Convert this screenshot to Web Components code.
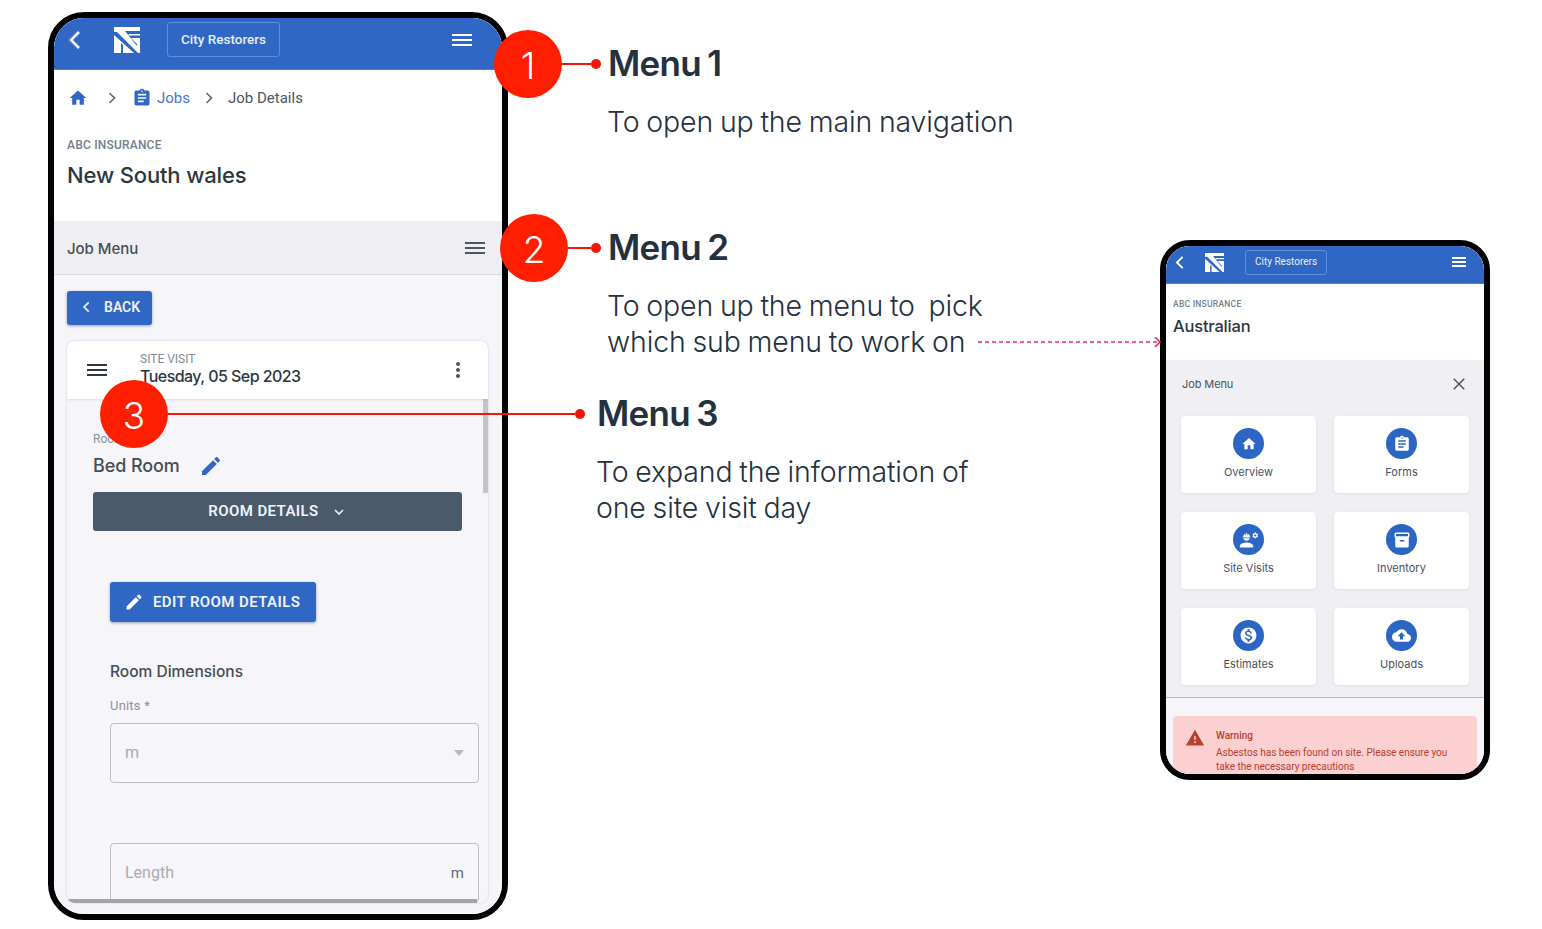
<!DOCTYPE html>
<html lang="en">
<head>
<meta charset="utf-8">
<title>Menus</title>
<style>
  html, body { margin: 0; background: #fff; }
  body { width: 1542px; height: 929px; position: relative; overflow: hidden; font-family: Roboto, sans-serif; }
</style>
</head>
<body>
<annotated-canvas>
  <phone-frame style="--x:48px;--y:12px;--pw:460px;--ph:908px;--pr:36px"><job-screen></job-screen></phone-frame>
  <phone-frame style="--x:1160px;--y:240px;--pw:330px;--ph:540px;--pr:30px"><menu-screen></menu-screen></phone-frame>

  <note-block style="--x:608px;--y:40px" title="Menu 1">To open up the main navigation</note-block>
  <note-block style="--x:608px;--y:224px" title="Menu 2">To open up the menu to&nbsp; pick<br>which sub menu to work on</note-block>
  <note-block style="--x:597px;--y:390px" title="Menu 3">To expand the information of<br>one site visit day</note-block>

  <call-out style="--x:494px;--y:30px;--len:29px">1</call-out>
  <call-out style="--x:500px;--y:214px;--len:23px">2</call-out>
  <call-out style="--x:100px;--y:380px;--len:407px">3</call-out>
  <dash-arrow style="--x:978px;--y:337px"></dash-arrow>
</annotated-canvas>

<script>
const PATHS = {
  home: "M10 20v-6h4v6h5v-8h3L12 3 2 12h3v8z",
  assignment: "M19 3h-4.18C14.4 1.84 13.3 1 12 1c-1.3 0-2.4.84-2.82 2H5c-1.1 0-2 .9-2 2v14c0 1.1.9 2 2 2h14c1.1 0 2-.9 2-2V5c0-1.1-.9-2-2-2zm-7 0c.55 0 1 .45 1 1s-.45 1-1 1-1-.45-1-1 .45-1 1-1zm2 14H7v-2h7v2zm3-4H7v-2h10v2zm0-4H7V7h10v2z",
  edit: "M3 17.25V21h3.75L17.81 9.94l-3.75-3.75L3 17.25zM20.71 7.04c.39-.39.39-1.02 0-1.41l-2.34-2.34c-.39-.39-1.02-.39-1.41 0l-1.83 1.83 3.75 3.75 1.83-1.83z",
  more: "M12 8c1.1 0 2-.9 2-2s-.9-2-2-2-2 .9-2 2 .9 2 2 2zm0 2c-1.1 0-2 .9-2 2s.9 2 2 2 2-.9 2-2-.9-2-2-2zm0 6c-1.1 0-2 .9-2 2s.9 2 2 2 2-.9 2-2-.9-2-2-2z",
  warning: "M1 21h22L12 2 1 21zm12-3h-2v-2h2v2zm0-4h-2v-4h2v4z",
  paid: "M12 2C6.48 2 2 6.48 2 12s4.48 10 10 10 10-4.48 10-10S17.52 2 12 2zm1.41 16.09V20h-2.67v-1.93c-1.71-.36-3.16-1.46-3.27-3.4h1.96c.1 1.05.82 1.87 2.65 1.87 1.96 0 2.4-.98 2.4-1.59 0-.83-.44-1.61-2.67-2.14-2.48-.6-4.18-1.62-4.18-3.67 0-1.72 1.39-2.84 3.11-3.21V4h2.67v1.95c1.86.45 2.79 1.86 2.87 3.39H14.3c-.05-1.11-.64-1.87-2.22-1.87-1.5 0-2.4.68-2.4 1.64 0 .84.65 1.39 2.67 1.91s4.18 1.39 4.18 3.91c-.01 1.83-1.38 2.83-3.12 3.16z",
  upload: "M19.35 10.04C18.67 6.59 15.64 4 12 4 9.11 4 6.6 5.64 5.35 8.04 2.34 8.36 0 10.91 0 14c0 3.31 2.69 6 6 6h13c2.76 0 5-2.24 5-5 0-2.64-2.05-4.78-4.65-4.96zM14 13v4h-4v-4H7l5-5 5 5h-3z",
  box: "M20 2H4c-1 0-2 .9-2 2v3.01c0 .72.43 1.34 1 1.69V20c0 1.1 1.1 2 2 2h14c.9 0 2-.9 2-2V8.7c.57-.35 1-.97 1-1.69V4c0-1.1-1-2-2-2zm-5 12H9v-2h6v2zm5-7H4V4l16-.02V7z",
  worker: "M9 15c-2.67 0-8 1.34-8 4v2h16v-2c0-2.66-5.33-4-8-4zM4.74 9h8.53c.27 0 .49-.22.49-.49v-.02c0-.27-.22-.49-.49-.49H13c0-1.48-.81-2.75-2-3.45v.95c0 .28-.22.5-.5.5s-.5-.22-.5-.5V4.14C9.68 4.06 9.35 4 9 4s-.68.06-1 .14V5.5c0 .28-.22.5-.5.5S7 5.78 7 5.5v-.95C5.81 5.25 5 6.52 5 8h-.26c-.27 0-.49.22-.49.49v.03c0 .26.22.48.49.48zM9 13c1.86 0 3.41-1.28 3.86-3H5.14c.45 1.72 2 3 3.86 3zM22.1 6.84c.01-.11.02-.22.02-.34s-.01-.23-.03-.34l.74-.58c.07-.05.08-.15.04-.22l-.7-1.21c-.04-.08-.14-.1-.21-.08l-.86.35c-.18-.14-.38-.25-.59-.34l-.13-.93c-.02-.09-.09-.15-.18-.15h-1.4c-.09 0-.16.06-.17.15l-.13.93c-.21.09-.41.21-.59.34l-.87-.35c-.08-.03-.17 0-.21.08l-.7 1.21c-.04.08-.03.17.04.22l.74.58c-.02.11-.03.23-.03.34s.01.23.03.34l-.74.58c-.07.05-.08.15-.04.22l.7 1.21c.04.08.14.1.21.08l.87-.35c.18.14.38.25.59.34l.13.93c.01.09.08.15.17.15h1.4c.09 0 .16-.06.17-.15l.13-.93c.21-.09.41-.21.59-.34l.87.35c.08.03.17 0 .21-.08l.7-1.21c.04-.08.03-.17-.04-.22l-.73-.58zM19.5 7.75c-.69 0-1.25-.56-1.25-1.25s.56-1.25 1.25-1.25 1.25.56 1.25 1.25-.56 1.25-1.25 1.25z"
};

// stroked glyphs share one viewBox too
const STROKES = {
  back: "M15 4 7 12l8 8",
  next: "M9 6l6 6-6 6",
  down: "M6 9l6 6 6-6",
  close: "M5 5l14 14M19 5L5 19"
};

class AppIcon extends HTMLElement {
  connectedCallback() {
    const name = this.getAttribute("name");
    const size = this.getAttribute("size") || 24;
    const color = this.getAttribute("color") || "currentColor";
    const weight = this.getAttribute("weight") || 2.4;
    const shape = PATHS[name]
      ? `<path fill="${color}" d="${PATHS[name]}"/>`
      : `<path fill="none" stroke="${color}" stroke-width="${weight}" d="${STROKES[name]}"/>`;
    this.attachShadow({ mode: "open" }).innerHTML = `
      <style>:host { display: inline-flex; flex: none; } svg { display: block; }</style>
      <svg width="${size}" height="${size}" viewBox="0 0 24 24">${shape}</svg>`;
  }
}
customElements.define("app-icon", AppIcon);

class BurgerIcon extends HTMLElement {
  connectedCallback() {
    this.attachShadow({ mode: "open" }).innerHTML = `
      <style>
        :host { display: flex; flex-direction: column; flex: none; gap: var(--bgap, 3px); width: var(--bw, 20px); }
        i { display: block; height: 2px; background: currentColor; }
      </style>
      <i></i><i></i><i></i>`;
  }
}
customElements.define("burger-icon", BurgerIcon);

class BrandLogo extends HTMLElement {
  connectedCallback() {
    const size = this.getAttribute("size") || 26;
    this.attachShadow({ mode: "open" }).innerHTML = `
      <style>:host { display: inline-flex; flex: none; } svg { display: block; }</style>
      <svg width="${size}" height="${size}" viewBox="0 0 26 26">
        <rect width="26" height="26" fill="#fff"/>
        <g fill="#3067c4">
          <polygon points="0,5 3,5 24,26 20,26 0,8"/>
          <polygon points="9,18 9,26 7,26 7,16"/>
          <polygon points="3,13 3,14 3,26 0,26 0,11" fill="#fff"/>
          <polygon points="11,4 26,4 26,7 15,7 14,8.5 26,8.5 26,11 17,11 23,17 23,19"/>
        </g>
      </svg>`;
  }
}
customElements.define("brand-logo", BrandLogo);

class PhoneFrame extends HTMLElement {
  constructor() {
    super();
    this.attachShadow({ mode: "open" }).innerHTML = `
      <style>
        :host {
          position: absolute; left: var(--x); top: var(--y); z-index: 0;
          width: var(--pw); height: var(--ph); box-sizing: border-box;
          border: 6px solid #000; border-radius: var(--pr);
          background: #fff; overflow: hidden; display: block;
        }
      </style>
      <slot></slot>`;
  }
}
customElements.define("phone-frame", PhoneFrame);

class AppBar extends HTMLElement {
  connectedCallback() {
    const small = this.hasAttribute("small");
    this.attachShadow({ mode: "open" }).innerHTML = `
      <style>
        :host {
          display: flex; align-items: center; box-sizing: border-box;
          height: var(--bar-h); background: #3067c4; color: #fff;
          padding: 0 var(--bar-right) var(--bar-lift) var(--bar-left);
          border-bottom: 1px solid #4a7fd6;
        }
        .logo { display: flex; margin-left: var(--logo-gap); }
        .org {
          margin-left: var(--org-gap); height: var(--org-h); box-sizing: border-box; white-space: nowrap;
          display: flex; align-items: center; padding: 0 var(--org-pad);
          border: 1px solid #5d8fe0; border-radius: 3px;
          font: var(--org-fw) var(--org-fs)/1 Roboto, sans-serif; color: #e6edf9;
        }
        burger-icon { margin-left: auto; }
      </style>
      <app-icon name="back" size="${small ? 17 : 24}" color="#fff" weight="2.6"></app-icon>
      <span class="logo"><brand-logo size="${small ? 19 : 26}"></brand-logo></span>
      <span class="org">City Restorers</span>
      <burger-icon></burger-icon>`;
  }
}
customElements.define("app-bar", AppBar);

class MuiButton extends HTMLElement {
  constructor() {
    super();
    this.attachShadow({ mode: "open" }).innerHTML = `
      <style>
        :host {
          display: inline-flex; align-items: center; justify-content: center; box-sizing: border-box;
          height: var(--bh, 34px); padding: var(--pad, 0 10px); gap: var(--gap, 10px);
          background: var(--bg, #3067c4); color: #eef3fb; border-radius: 3px; white-space: nowrap;
          font: 600 var(--fs, 14px)/1 Roboto, sans-serif; letter-spacing: var(--ls, 0);
          box-shadow: 0 1px 3px rgba(40,60,100,.45);
        }
      </style>
      <slot></slot>`;
  }
}
customElements.define("mui-button", MuiButton);

class OutlinedField extends HTMLElement {
  constructor() {
    super();
    this.attachShadow({ mode: "open" }).innerHTML = `
      <style>
        :host {
          display: flex; align-items: center; justify-content: space-between; box-sizing: border-box;
          border: 1px solid #bdbdc3; border-radius: 4px; padding: 0 14px;
          font: 400 16px/1 Roboto, sans-serif; color: #a9abb0;
        }
      </style>
      <slot></slot><slot name="end"></slot>`;
  }
}
customElements.define("outlined-field", OutlinedField);

class JobScreen extends HTMLElement {
  constructor() {
    super();
    this.attachShadow({ mode: "open" }).innerHTML = `
      <style>
        :host { display: flex; flex-direction: column; height: 100%; background: #f5f5fa; color: #2f3a46; }
        app-bar { --bar-h: 52px; --bar-lift: 8px; --bar-left: 10px; --bar-right: 30px; --logo-gap: 26px; --org-gap: 27px; --org-h: 35px; --org-pad: 13px; --org-fs: 13.5px; --org-fw: 500; flex: none; }
        .top { background: #fff; height: 151px; box-sizing: border-box; padding: 0 13px; flex: none; }
        .crumbs { display: flex; align-items: center; height: 56px; font: 400 15px/1 Roboto, sans-serif; color: #4a5560; }
        .crumbs .home { margin-left: 1px; }
        .crumbs .sep1 { margin-left: 14px; }
        .crumbs .clip { margin-left: 10px; }
        .crumbs .jobs { margin-left: 5px; color: #4a75c8; }
        .crumbs .sep2 { margin-left: 9px; }
        .crumbs .cur { margin-left: 9px; }
        .ins { margin-top: 12px; font: 500 12px/14px Roboto, sans-serif; letter-spacing: .2px; color: #75808c; }
        h1 { margin: 10px 0 0; font: 500 22px/26px Inter, sans-serif; letter-spacing: -.15px; color: #2c3640; }
        .menu-bar {
          flex: none; display: flex; align-items: center; justify-content: space-between; box-sizing: border-box;
          height: 54px; padding: 1px 17px 0 13px; background: #eeeef3; border-bottom: 1px solid #d9d9de;
          font: 500 15px/1 Inter, sans-serif; letter-spacing: -.05px; color: #454f59;
        }
        .body { flex: 1; min-height: 0; padding: 16px 14px 11px 13px; display: flex; flex-direction: column; align-items: flex-start; }
        .back { --bh: 34px; --pad: 0 12px 2px 13px; --gap: 10px; flex: none; }
        .card {
          margin-top: 16px; flex: 1; min-height: 0; width: 100%; box-sizing: border-box; overflow: hidden;
          border-radius: 8px; position: relative;
          box-shadow: 0 0 2px rgba(60,60,80,.25); background: #f5f5fa; display: flex; flex-direction: column;
        }
        .card-head {
          flex: none; height: 58px; box-sizing: border-box; background: #fff;
          display: flex; align-items: center; padding: 0 18px 0 20px;
          box-shadow: 0 1px 2px rgba(60,60,80,.12); position: relative; z-index: 1;
        }
        .card-head .who { margin: -3px 0 0 33px; flex: 1; }
        .kicker { font: 400 12px/14px Roboto, sans-serif; color: #7f8993; }
        .date { font: 500 16px/20px Inter, sans-serif; letter-spacing: -.55px; color: #2c3640; }
        .scroll { position: absolute; right: 0; top: 58px; width: 5px; height: 94px; background: #c4c4c8; }
        .content { padding: 32px 26px 0; flex: 1; min-height: 0; overflow: hidden; position: relative; }
        .label { font: 400 12px/16px Roboto, sans-serif; color: #8a929b; }
        .room { display: flex; align-items: center; margin-top: 4px; height: 30px; font: 500 18px/1 Inter, sans-serif; letter-spacing: -.1px; color: #454d56; }
        .room app-icon { margin-left: 19px; }
        .details { width: 369px; --bh: 39px; --bg: #4a5a6a; --gap: 12px; --fs: 15px; --ls: .4px; margin-top: 11px; box-shadow: none; display: flex; }
        .inner { padding-left: 17px; }
        .edit { --bh: 40px; --pad: 0 16px 0 14px; --gap: 9px; --fs: 15px; --ls: .4px; margin-top: 51px; }
        h2 { margin: 41px 0 0; font: 500 15.5px/18px Inter, sans-serif; color: #454d56; }
        .units { margin-top: 17px; font: 400 13px/15px Roboto, sans-serif; color: #8a929b; letter-spacing: .2px; }
        .select { width: 369px; height: 60px; margin-top: 10px; }
        .caret { width: 0; height: 0; border: 5px solid transparent; border-top: 6px solid #b8b9bd; border-bottom: 0; }
        .length { width: 369px; height: 60px; margin-top: 60px; }
        .unit { color: #5d6f80; font-size: 15px; }
        .edge { position: absolute; left: 1px; right: 11px; bottom: 0; height: 4px; background: #a3a4ab; z-index: 2; border-radius: 0 0 0 8px; }
      </style>
      <app-bar></app-bar>
      <div class="top">
        <div class="crumbs">
          <app-icon class="home" name="home" size="20" color="#3067c4"></app-icon>
          <app-icon class="sep1" name="next" size="20" color="#5f6b76" weight="2"></app-icon>
          <app-icon class="clip" name="assignment" size="20" color="#3067c4"></app-icon>
          <span class="jobs">Jobs</span>
          <app-icon class="sep2" name="next" size="20" color="#5f6b76" weight="2"></app-icon>
          <span class="cur">Job Details</span>
        </div>
        <div class="ins">ABC INSURANCE</div>
        <h1>New South wales</h1>
      </div>
      <div class="menu-bar"><span>Job Menu</span><burger-icon style="color:#4a5560"></burger-icon></div>
      <div class="body">
        <mui-button class="back"><app-icon name="back" size="14" color="#e6edf9" weight="3"></app-icon><span>BACK</span></mui-button>
        <div class="card">
          <div class="card-head">
            <burger-icon style="color:#2c3640"></burger-icon>
            <div class="who"><div class="kicker">SITE VISIT</div><div class="date">Tuesday, 05 Sep 2023</div></div>
            <app-icon name="more" size="24" color="#4a5560"></app-icon>
          </div>
          <div class="scroll"></div>
          <div class="content">
            <div class="label">Room</div>
            <div class="room"><span>Bed Room</span><app-icon name="edit" size="24" color="#3067c4"></app-icon></div>
            <mui-button class="details"><span>ROOM DETAILS</span><app-icon name="down" size="16" color="#e6edf9" weight="2.6"></app-icon></mui-button>
            <div class="inner">
              <mui-button class="edit"><app-icon name="edit" size="20" color="#fff"></app-icon><span>EDIT ROOM DETAILS</span></mui-button>
              <h2>Room Dimensions</h2>
              <div class="units">Units *</div>
              <outlined-field class="select"><span>m</span><span slot="end" class="caret"></span></outlined-field>
              <outlined-field class="length"><span>Length</span><span slot="end" class="unit">m</span></outlined-field>
            </div>
            <div class="edge"></div>
          </div>
        </div>
      </div>`;
  }
}
customElements.define("job-screen", JobScreen);

class MenuTile extends HTMLElement {
  connectedCallback() {
    const icon = this.getAttribute("icon");
    const size = this.getAttribute("size") || 17;
    this.attachShadow({ mode: "open" }).innerHTML = `
      <style>
        :host {
          display: flex; flex-direction: column; align-items: center; box-sizing: border-box;
          height: 77px; padding-top: 12px; background: #fff; border-radius: 4px;
          box-shadow: 0 1px 3px rgba(70,70,100,.12);
          font: 400 11px/14px Inter, sans-serif; color: #4a525b;
        }
        .disc { width: 31px; height: 31px; border-radius: 50%; background: #2c66c4; display: grid; place-items: center; }
        .name { margin-top: 6px; }
      </style>
      <span class="disc"><app-icon name="${icon}" size="${size}" color="#fff"></app-icon></span>
      <span class="name"><slot></slot></span>`;
  }
}
customElements.define("menu-tile", MenuTile);

class MenuScreen extends HTMLElement {
  constructor() {
    super();
    this.attachShadow({ mode: "open" }).innerHTML = `
      <style>
        :host { display: flex; flex-direction: column; height: 100%; background: #f5f5fa; overflow: hidden; }
        app-bar { --bar-h: 38px; --bar-lift: 5px; --bar-left: 6px; --bar-right: 18px; --logo-gap: 16px; --org-gap: 21px; --org-h: 25px; --org-pad: 9px; --org-fs: 10px; --org-fw: 400; --bw: 14px; --bgap: 2px; flex: none; }
        .top { flex: none; height: 76px; box-sizing: border-box; background: #fff; padding: 15px 7px 0; }
        .ins { font: 500 8.5px/10px Roboto, sans-serif; letter-spacing: .25px; color: #75808c; }
        h1 { margin: 7px 0 0; font: 500 16.5px/20px Inter, sans-serif; letter-spacing: -.2px; color: #2c3640; }
        .panel { flex: none; height: 338px; box-sizing: border-box; background: #efeff4; border-bottom: 1px solid #b9b9bd; padding: 0 15px; }
        .panel-head { height: 48px; margin-bottom: 8px; display: flex; align-items: center; justify-content: space-between; padding-right: 1px; font: 400 11px/1 Inter, sans-serif; letter-spacing: -.1px; color: #4a525b; }
        .panel-head span { padding-left: 1px; }
        .grid { display: grid; grid-template-columns: 135px 135px; column-gap: 18px; row-gap: 19px; }
        .alert {
          margin: 18px 7px 0; height: 70px; flex: none; box-sizing: border-box; padding: 13px 29px 0 43px;
          border-radius: 4px; background: #fccfd0; color: #b8402f; position: relative;
          font: 400 10px/14px Roboto, sans-serif;
        }
        .alert app-icon { position: absolute; left: 12px; top: 12px; }
        .alert b { display: block; font-weight: 500; margin-bottom: 3px; }
      </style>
      <app-bar small></app-bar>
      <div class="top"><div class="ins">ABC INSURANCE</div><h1>Australian</h1></div>
      <div class="panel">
        <div class="panel-head"><span>Job Menu</span><app-icon name="close" size="18" color="#4a525b" weight="1.9"></app-icon></div>
        <div class="grid">
          <menu-tile icon="home" size="16">Overview</menu-tile>
          <menu-tile icon="assignment" size="18">Forms</menu-tile>
          <menu-tile icon="worker" size="20">Site Visits</menu-tile>
          <menu-tile icon="box" size="18">Inventory</menu-tile>
          <menu-tile icon="paid" size="19">Estimates</menu-tile>
          <menu-tile icon="upload" size="19">Uploads</menu-tile>
        </div>
      </div>
      <div class="alert">
        <app-icon name="warning" size="20" color="#b8402f"></app-icon>
        <b>Warning</b>Asbestos has been found on site. Please ensure you take the necessary precautions
      </div>`;
  }
}
customElements.define("menu-screen", MenuScreen);

class NoteBlock extends HTMLElement {
  connectedCallback() {
    this.attachShadow({ mode: "open" }).innerHTML = `
      <style>
        :host { position: absolute; left: var(--x); top: var(--y); display: block; color: #24313f; white-space: nowrap; }
        h3 { margin: 0; font: 600 35px/46px Inter, sans-serif; letter-spacing: -.7px; word-spacing: -2px; }
        p { margin: 18px 0 0 -1px; font: 300 28.5px/36px Inter, sans-serif; letter-spacing: -.15px; word-spacing: -1px; }
      </style>
      <h3>${this.getAttribute("title")}</h3>
      <p><slot></slot></p>`;
  }
}
customElements.define("note-block", NoteBlock);

class CallOut extends HTMLElement {
  constructor() {
    super();
    this.attachShadow({ mode: "open" }).innerHTML = `
      <style>
        :host {
          position: absolute; left: var(--x); top: var(--y); z-index: 1; width: 68px; height: 68px; border-radius: 50%;
          background: #ff1f00; color: #fff; display: grid; place-items: center; box-sizing: border-box; padding-top: 3px;
          font: 300 37px/1 Inter, sans-serif;
        }
        .lead { position: absolute; left: 68px; top: 33px; width: var(--len); height: 2px; background: #f5140a; }
        .lead::after { content: ""; position: absolute; right: -10px; top: -4px; width: 10px; height: 10px; border-radius: 50%; background: #f5140a; }
      </style>
      <slot></slot><span class="lead"></span>`;
  }
}
customElements.define("call-out", CallOut);

class DashArrow extends HTMLElement {
  connectedCallback() {
    this.attachShadow({ mode: "open" }).innerHTML = `
      <style>:host { position: absolute; left: var(--x); top: var(--y); z-index: 1; display: block; } svg { display: block; }</style>
      <svg width="186" height="12" viewBox="0 0 186 12" fill="none" stroke="#f0246c" stroke-width="1.6">
        <path d="M0 5H181" stroke-dasharray="4 3"/>
        <path d="M177 0l5 5-5 5"/>
      </svg>`;
  }
}
customElements.define("dash-arrow", DashArrow);

class AnnotatedCanvas extends HTMLElement {
  constructor() {
    super();
    this.attachShadow({ mode: "open" }).innerHTML = `
      <style>:host { display: block; width: 1542px; height: 929px; position: relative; }</style>
      <slot></slot>`;
  }
}
customElements.define("annotated-canvas", AnnotatedCanvas);
</script>
</body>
</html>
